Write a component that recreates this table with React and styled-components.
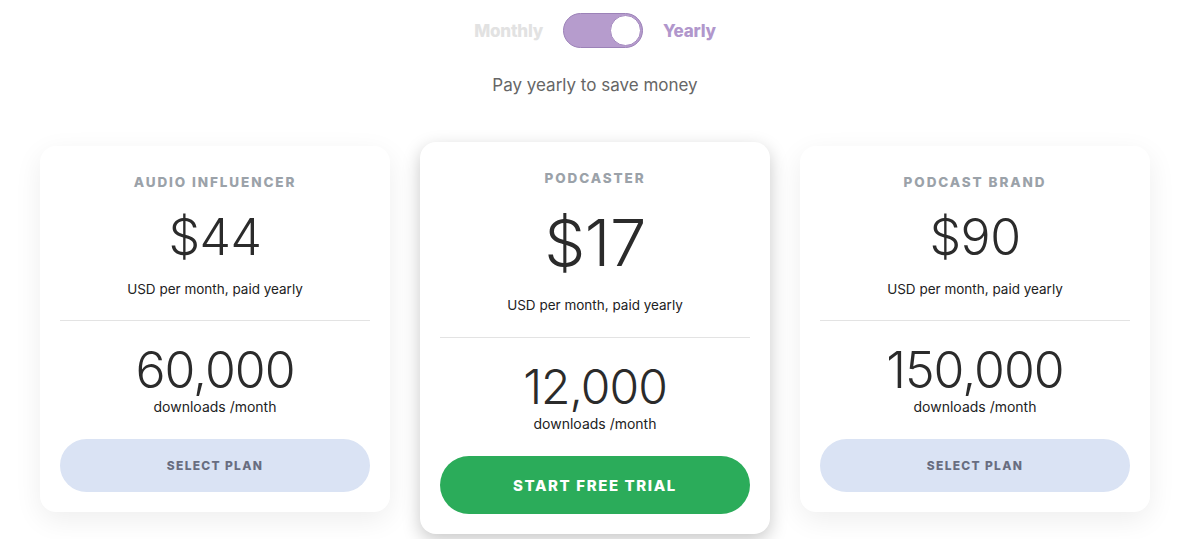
import React from "react";
import styled, { createGlobalStyle } from "styled-components";

const Global = createGlobalStyle`
  html, body { margin: 0; padding: 0; background: #ffffff; }
  body { font-family: "Inter", "Noto Sans", sans-serif; color: #2b2b2b; }
  * { box-sizing: border-box; }
`;

const Page = styled.div`
  display: flex;
  flex-direction: column;
  align-items: center;
  padding: 13px 4px 0 0;
  width: 1194px;
  height: 539px;
  overflow: hidden;
`;

const ToggleRow = styled.div`
  display: flex;
  align-items: center;
  gap: 20px;
  height: 35px;
`;

const ToggleLabel = styled.span`
  font-size: 17px;
  font-weight: 800;
  letter-spacing: -0.2px;
  color: ${(p) => (p.$active ? "#b197cc" : "#e2e2e2")};
`;

const Switch = styled.div`
  width: 80px;
  height: 35px;
  border-radius: 18px;
  background: #b69ccd;
  border: 1px solid #9c82b8;
  display: flex;
  align-items: center;
  justify-content: flex-end;
  padding: 0 1px;
`;

const Knob = styled.div`
  width: 31px;
  height: 31px;
  border-radius: 50%;
  background: #ffffff;
  border: 1px solid #a68bc0;
`;

const Subtitle = styled.p`
  margin: 27px 0 0;
  font-size: 17px;
  line-height: 20px;
  color: #666666;
`;

const CardRow = styled.div`
  display: flex;
  align-items: flex-start;
  gap: 30px;
  margin-top: 47px;
`;

const Card = styled.div`
  width: 350px;
  background: #ffffff;
  border-radius: 16px;
  padding: 26px 20px 20px;
  display: flex;
  flex-direction: column;
  align-items: stretch;
  text-align: center;
  margin-top: ${(p) => (p.$featured ? "0" : "4px")};
  box-shadow: ${(p) =>
    p.$featured
      ? "0 6px 18px rgba(0,0,0,0.22)"
      : "0 8px 28px rgba(0,0,0,0.07)"};
`;

const PlanName = styled.div`
  font-size: 13.5px;
  line-height: 20px;
  font-weight: 800;
  letter-spacing: 1.9px;
  color: #9ba2a9;
`;

const Price = styled.div`
  font-size: ${(p) => (p.$featured ? "65px" : "50px")};
  line-height: ${(p) => (p.$featured ? "76px" : "60px")};
  margin-top: ${(p) => (p.$featured ? "17px" : "15px")};
  font-weight: 300;
  color: #2b2b2b;
  letter-spacing: -0.5px;
`;

const Note = styled.div`
  font-size: ${(p) => p.$size || "13.5px"};
  line-height: ${(p) => p.$lh || "20px"};
  color: #222;
  margin-top: ${(p) => p.$mt || "0"};
`;

const Divider = styled.hr`
  border: none;
  height: 1px;
  background: #e3e3e3;
  margin: ${(p) => (p.$featured ? "22px 0 0" : "21px 0 0")};
`;

const Amount = styled.div`
  font-size: ${(p) => (p.$featured ? "48px" : "50px")};
  line-height: 60px;
  font-weight: 300;
  letter-spacing: -1px;
  color: #2b2b2b;
  margin-top: 19px;
`;

const Button = styled.button`
  border: none;
  border-radius: 30px;
  width: 100%;
  height: ${(p) => (p.$primary ? "58px" : "53px")};
  margin-top: 25px;
  background: ${(p) => (p.$primary ? "#2bac5a" : "#dae3f4")};
  color: ${(p) => (p.$primary ? "#ffffff" : "#686d80")};
  font-family: inherit;
  font-size: ${(p) => (p.$primary ? "15px" : "12px")};
  font-weight: 800;
  letter-spacing: ${(p) => (p.$primary ? "1.6px" : "1.3px")};
  cursor: pointer;
`;

const plans = [
  { name: "AUDIO INFLUENCER", price: "$44", downloads: "60,000" },
  { name: "PODCASTER", price: "$17", downloads: "12,000", featured: true },
  { name: "PODCAST BRAND", price: "$90", downloads: "150,000" },
];

export default function App() {
  return (
    <>
      <Global />
      <Page>
        <ToggleRow>
          <ToggleLabel>Monthly</ToggleLabel>
          <Switch>
            <Knob />
          </Switch>
          <ToggleLabel $active>Yearly</ToggleLabel>
        </ToggleRow>
        <Subtitle>Pay yearly to save money</Subtitle>
        <CardRow>
          {plans.map((p) => (
            <Card key={p.name} $featured={p.featured}>
              <PlanName>{p.name}</PlanName>
              <Price $featured={p.featured}>{p.price}</Price>
              <Note $mt={p.featured ? "14px" : "12px"}>
                USD per month, paid yearly
              </Note>
              <Divider $featured={p.featured} />
              <Amount $featured={p.featured}>{p.downloads}</Amount>
              <Note $size="14px" $lh="14px">
                downloads /month
              </Note>
              <Button $primary={p.featured}>
                {p.featured ? "START FREE TRIAL" : "SELECT PLAN"}
              </Button>
            </Card>
          ))}
        </CardRow>
      </Page>
    </>
  );
}
